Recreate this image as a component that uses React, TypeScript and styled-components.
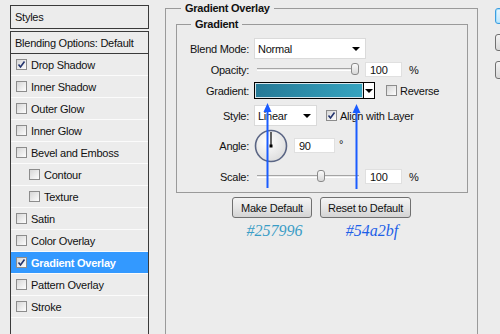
import React from 'react';
import styled, { createGlobalStyle } from 'styled-components';

const GlobalStyle = createGlobalStyle`
  html, body {
    margin: 0;
    padding: 0;
    background: #ececec;
  }

  body {
    font-family: 'Liberation Sans', Arial, sans-serif;
    font-size: 11px;
    letter-spacing: -0.25px;
    color: #111;
  }
`;

const Page = styled.div`
  width: 500px;
  height: 334px;
  overflow: hidden;
  display: flex;
  align-items: flex-start;
  background: #ececec;
`;

/* left: layer style list */

const StylesPanel = styled.div`
  margin: 5px 0 0 10px;
  width: 139px;
  flex: none;
  display: flex;
  flex-direction: column;
`;

const PanelHeader = styled.div`
  height: 22px;
  border: 1px solid #3a3a3a;
  margin-bottom: 2px;
  padding-left: 4px;
  display: flex;
  align-items: center;
`;

const List = styled.div`
  height: 320px;
  border: 1px solid #3a3a3a;
  border-bottom: none;
`;

const BlendRow = styled.div`
  height: 21px;
  padding-left: 4px;
  border-bottom: 1px solid #3a3a3a;
  display: flex;
  align-items: center;
`;

const ItemRow = styled.div<{ $active?: boolean; $indent?: boolean }>`
  height: 21px;
  border-bottom: 1px solid #fbfbfb;
  padding-left: ${(p) => (p.$indent ? '18px' : '5px')};
  display: flex;
  align-items: center;
  gap: 4px;
  background: ${(p) => (p.$active ? '#3399ff' : 'transparent')};
  color: ${(p) => (p.$active ? '#fff' : '#111')};
  font-weight: ${(p) => (p.$active ? 'bold' : 'normal')};
`;

const Box = styled.span`
  width: 11px;
  height: 11px;
  flex: none;
  box-sizing: border-box;
  border: 1px solid #8c8c8c;
  background: linear-gradient(135deg, #d6d6d6, #fdfdfd);
  display: flex;
  align-items: center;
  justify-content: center;
`;

const Check: React.FC<{ checked?: boolean }> = ({ checked }) => (
  <Box>
    {checked && (
      <svg width="9" height="9" viewBox="0 0 9 9">
        <path d="M1.5 4.5 L3.5 7 L7.5 1.5" fill="none" stroke="#23346e" strokeWidth="1.6" />
      </svg>
    )}
  </Box>
);

/* middle: gradient overlay settings */

const OuterSet = styled.fieldset`
  margin: 2px 0 0 16px;
  padding: 0;
  width: 313px;
  min-width: 0;
  height: 400px;
  box-sizing: border-box;
  flex: none;
  border: 1px solid #9a9a9a;

  & > legend {
    margin-left: 15px;
    padding: 0 4px;
    line-height: 13px;
    font-weight: bold;
  }
`;

const InnerSet = styled.fieldset`
  margin: 3px 9px 0 10px;
  padding: 0;
  min-width: 0;
  border: 1px solid #9a9a9a;

  & > legend {
    margin-left: 14px;
    padding: 0 4px;
    line-height: 13px;
    font-weight: bold;
  }
`;

const Rows = styled.div`
  position: relative;
  padding: 7px 0 8px;
`;

const Row = styled.div<{ $h: number; $mt?: number }>`
  height: ${(p) => p.$h}px;
  margin-top: ${(p) => p.$mt ?? 0}px;
  display: flex;
  align-items: center;
`;

const Label = styled.span`
  width: 72px;
  margin-right: 5px;
  flex: none;
  text-align: right;
`;

const Select = styled.div<{ $w: number }>`
  width: ${(p) => p.$w}px;
  height: 21px;
  box-sizing: border-box;
  border: 1px solid #dadada;
  background: #fff;
  padding: 0 5px 0 3px;
  display: flex;
  align-items: center;
  justify-content: space-between;
`;

const DropArrow = styled.span`
  width: 0;
  height: 0;
  border-left: 4px solid transparent;
  border-right: 4px solid transparent;
  border-top: 4px solid #000;
`;

const SliderBox = styled.div`
  position: relative;
  width: 107px;
  height: 15px;
  flex: none;
`;

const Track = styled.div`
  margin: 6px 0 0 3px;
  width: 102px;
  height: 1px;
  border-top: 1px solid #a4a4a4;
  border-bottom: 1px solid #fff;
`;

const Thumb = styled.span`
  position: absolute;
  top: 1px;
  width: 8px;
  height: 12px;
  box-sizing: border-box;
  border: 1px solid #8a8a8a;
  border-radius: 3px;
  background: linear-gradient(#fafafa, #d8d8d8);
`;

const NumInput = styled.div<{ $w: number; $ml?: number }>`
  width: ${(p) => p.$w}px;
  height: 15px;
  margin-left: ${(p) => p.$ml ?? 0}px;
  box-sizing: border-box;
  border: 1px solid #e0e0e0;
  background: #fff;
  padding-left: 4px;
  display: flex;
  align-items: center;
`;

const Unit = styled.span<{ $ml: number; $up?: boolean }>`
  margin-left: ${(p) => p.$ml}px;
  align-self: ${(p) => (p.$up ? 'flex-start' : 'center')};
  margin-top: ${(p) => (p.$up ? '9px' : '0')};
`;

const GradientPicker = styled.div`
  width: 121px;
  height: 17px;
  box-sizing: border-box;
  border: 1px solid #000;
  display: flex;
`;

const GradientFill = styled.div<{ $from: string; $to: string }>`
  flex: 1;
  border: 1px solid #d6e6ec;
  background: linear-gradient(90deg, ${(p) => p.$from}, ${(p) => p.$to});
`;

const PickerArrow = styled.div`
  width: 10px;
  border-left: 1px solid #000;
  background: #fff;
  display: flex;
  align-items: center;
  justify-content: center;
`;

const CheckLabel = styled.label<{ $ml: number }>`
  margin-left: ${(p) => p.$ml}px;
  display: flex;
  align-items: center;
  gap: 3px;
`;

const Annotations = styled.svg`
  position: absolute;
  left: 0;
  top: 0;
  pointer-events: none;
`;

const ButtonRow = styled.div`
  margin-top: 4px;
  display: flex;
  justify-content: center;
  gap: 8px;
`;

const Button = styled.button<{ $w: number }>`
  width: ${(p) => p.$w}px;
  height: 21px;
  padding: 0;
  border: 1px solid #707070;
  border-radius: 3px;
  background: linear-gradient(#f4f4f4, #e6e6e6 50%, #d4d4d4);
  font: inherit;
  letter-spacing: inherit;
  color: #111;
`;

const Note = styled.span<{ $w: number; $color: string; $shift: number }>`
  width: ${(p) => p.$w}px;
  padding-left: ${(p) => p.$shift}px;
  box-sizing: border-box;
  text-align: center;
  font-family: 'Liberation Serif', 'Times New Roman', serif;
  font-style: italic;
  font-size: 16px;
  line-height: 18px;
  letter-spacing: 0;
  color: ${(p) => p.$color};
`;

/* right: partially visible dialog buttons */

const SideColumn = styled.div`
  margin: 8px 0 0 17px;
  display: flex;
  flex-direction: column;
  gap: 10px;
  flex: none;
`;

const SideButton = styled.div<{ $focus?: boolean; $h: number }>`
  width: 24px;
  height: ${(p) => p.$h}px;
  box-sizing: border-box;
  border: 1px solid ${(p) => (p.$focus ? '#3c9de0' : '#707070')};
  border-radius: 3px;
  background: ${(p) =>
    p.$focus ? 'linear-gradient(#eaf6fd, #bee6fd)' : 'linear-gradient(#f4f4f4, #d8d8d8)'};
  box-shadow: ${(p) => (p.$focus ? 'inset 0 0 0 1px #a7e0fb' : 'none')};
`;

const styleItems = [
  { label: 'Drop Shadow', checked: true },
  { label: 'Inner Shadow' },
  { label: 'Outer Glow' },
  { label: 'Inner Glow' },
  { label: 'Bevel and Emboss' },
  { label: 'Contour', indent: true },
  { label: 'Texture', indent: true },
  { label: 'Satin' },
  { label: 'Color Overlay' },
  { label: 'Gradient Overlay', checked: true, active: true },
  { label: 'Pattern Overlay' },
  { label: 'Stroke' },
];

const Slider: React.FC<{ value: number; min: number; max: number }> = ({ value, min, max }) => {
  const frac = (value - min) / (max - min);
  return (
    <SliderBox>
      <Track />
      <Thumb style={{ left: 3 + frac * 94 }} />
    </SliderBox>
  );
};

const AngleDial: React.FC<{ angle: number }> = ({ angle }) => {
  const rad = (angle * Math.PI) / 180;
  const cx = 17;
  const cy = 17;
  return (
    <svg width="34" height="34" viewBox="0 0 34 34">
      <defs>
        <radialGradient id="dialFill" cx="0.4" cy="0.35" r="0.7">
          <stop offset="0" stopColor="#ffffff" />
          <stop offset="1" stopColor="#dcdcdc" />
        </radialGradient>
      </defs>
      <circle cx={cx} cy={cy} r="15.5" fill="url(#dialFill)" stroke="#5a6584" strokeWidth="1.6" />
      <line
        x1={cx}
        y1={cy}
        x2={cx + Math.cos(rad) * 14}
        y2={cy - Math.sin(rad) * 14}
        stroke="#000"
        strokeWidth="1.2"
      />
      <rect x={cx - 1.5} y={cy - 1.5} width="3" height="3" fill="#000" />
    </svg>
  );
};

const UpArrow: React.FC<{ x: number; y1: number; y2: number }> = ({ x, y1, y2 }) => (
  <g>
    <line x1={x} y1={y1 + 4} x2={x} y2={y2} stroke="#1a5cff" strokeWidth="2" />
    <polygon points={`${x - 4},${y1 + 9} ${x},${y1} ${x + 4},${y1 + 9}`} fill="#1a5cff" />
  </g>
);

const App: React.FC = () => {
  return (
    <>
      <GlobalStyle />
      <Page>
        <StylesPanel>
          <PanelHeader>Styles</PanelHeader>
          <List>
            <BlendRow>Blending Options: Default</BlendRow>
            {styleItems.map((item) => (
              <ItemRow key={item.label} $active={item.active} $indent={item.indent}>
                <Check checked={item.checked} />
                {item.label}
              </ItemRow>
            ))}
          </List>
        </StylesPanel>

        <OuterSet>
          <legend>Gradient Overlay</legend>
          <InnerSet>
            <legend>Gradient</legend>
            <Rows>
              <Row $h={21}>
                <Label>Blend Mode:</Label>
                <Select $w={112}>
                  Normal
                  <DropArrow />
                </Select>
              </Row>
              <Row $h={15} $mt={3}>
                <Label>Opacity:</Label>
                <Slider value={100} min={0} max={100} />
                <NumInput $w={37} $ml={4}>100</NumInput>
                <Unit $ml={7}>%</Unit>
              </Row>
              <Row $h={17} $mt={5}>
                <Label>Gradient:</Label>
                <GradientPicker>
                  <GradientFill $from="#257996" $to="#35a4c0" />
                  <PickerArrow>
                    <DropArrow />
                  </PickerArrow>
                </GradientPicker>
                <CheckLabel $ml={11}>
                  <Check />
                  Reverse
                </CheckLabel>
              </Row>
              <Row $h={21} $mt={6}>
                <Label>Style:</Label>
                <Select $w={63}>
                  Linear
                  <DropArrow />
                </Select>
                <CheckLabel $ml={9}>
                  <Check checked />
                  Align with Layer
                </CheckLabel>
              </Row>
              <Row $h={33} $mt={3}>
                <Label>Angle:</Label>
                <AngleDial angle={90} />
                <NumInput $w={41} $ml={6}>90</NumInput>
                <Unit $ml={4} $up>°</Unit>
              </Row>
              <Row $h={15} $mt={7}>
                <Label>Scale:</Label>
                <Slider value={100} min={10} max={150} />
                <NumInput $w={37} $ml={4}>100</NumInput>
                <Unit $ml={7}>%</Unit>
              </Row>
              <Annotations width="290" height="170">
                <UpArrow x={90.5} y1={72} y2={157} />
                <UpArrow x={179.5} y1={73} y2={158} />
              </Annotations>
            </Rows>
          </InnerSet>

          <ButtonRow>
            <Button $w={80}>Make Default</Button>
            <Button $w={91}>Reset to Default</Button>
          </ButtonRow>
          <ButtonRow>
            <Note $w={80} $color="#3a9dc6" $shift={5}>#257996</Note>
            <Note $w={91} $color="#1d5fe8" $shift={13}>#54a2bf</Note>
          </ButtonRow>
        </OuterSet>

        <SideColumn>
          <SideButton $focus $h={16} />
          <SideButton $h={17} />
          <SideButton $h={18} />
        </SideColumn>
      </Page>
    </>
  );
};

export default App;
